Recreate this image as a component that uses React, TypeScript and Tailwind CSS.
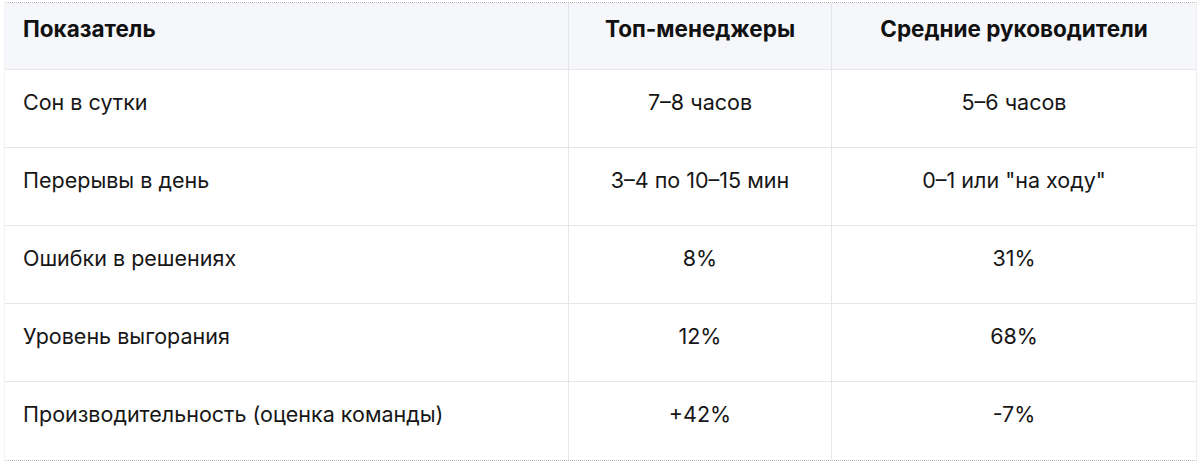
import React from "react";

const rows = [
  ["Сон в сутки", "7–8 часов", "5–6 часов"],
  ["Перерывы в день", "3–4 по 10–15 мин", "0–1 или \"на ходу\""],
  ["Ошибки в решениях", "8%", "31%"],
  ["Уровень выгорания", "12%", "68%"],
  ["Производительность (оценка команды)", "+42%", "-7%"],
];

export default function App() {
  return (
    <div
      className="w-[1200px] h-[466px] bg-white text-[#161616]"
      style={{ fontFamily: "Inter, 'Noto Sans', sans-serif" }}
    >
      <div className="pt-[2px] pl-[4px]">
        <div className="w-[1193px] border-t border-dotted border-t-[#b8b8b8] border-b border-b-[#b8b8b8] border-l border-l-[#e4e6ec] border-r border-r-[#dcdfe6]">
          <div className="grid grid-cols-[563px_263px_365px] bg-[#f6f7fa] border-b border-[#e4e6ec] h-[67px]">
            <div className="pl-[18px] pt-[13px] text-[22.5px] leading-[26px] font-bold text-[#111]">Показатель</div>
            <div className="pt-[13px] text-[22.5px] leading-[26px] font-bold text-center text-[#111] border-l border-[#e4e6ec]">Топ-менеджеры</div>
            <div className="pt-[13px] text-[22.5px] leading-[26px] font-bold text-center text-[#111] border-l border-[#e4e6ec]">Средние руководители</div>
          </div>
          {rows.map((r, i) => (
            <div
              key={i}
              className={
                i < rows.length - 1
                  ? "grid grid-cols-[563px_263px_365px] h-[78px] border-b border-[#e4e6ec]"
                  : "grid grid-cols-[563px_263px_365px] h-[78px]"
              }
            >
              <div className="pl-[18px] pt-[19px] text-[21.5px] leading-[26px]">{r[0]}</div>
              <div className="pt-[19px] text-[21.5px] leading-[26px] text-center border-l border-[#e4e6ec]">{r[1]}</div>
              <div className="pt-[19px] text-[21.5px] leading-[26px] text-center border-l border-[#e4e6ec]">{r[2]}</div>
            </div>
          ))}
        </div>
      </div>
    </div>
  );
}
